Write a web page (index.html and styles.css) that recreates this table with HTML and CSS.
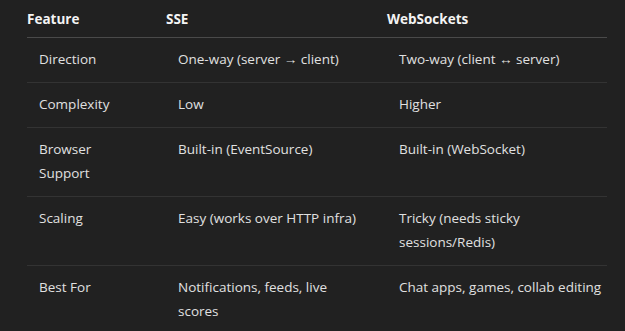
FILE: index.html
```html
<!DOCTYPE html>
<html lang="en">
<head>
    <meta charset="UTF-8">
    <meta name="viewport" content="width=device-width, initial-scale=1.0">
    <title>SSE vs WebSockets</title>
    <link rel="stylesheet" href="styles.css">
</head>
<body>
    <table class="compare">
        <colgroup>
            <col class="col-feature">
            <col class="col-sse">
            <col class="col-ws">
        </colgroup>
        <thead>
            <tr>
                <th>Feature</th>
                <th>SSE</th>
                <th>WebSockets</th>
            </tr>
        </thead>
        <tbody>
            <tr>
                <td>Direction</td>
                <td>One-way (server → client)</td>
                <td>Two-way (client ↔ server)</td>
            </tr>
            <tr>
                <td>Complexity</td>
                <td>Low</td>
                <td>Higher</td>
            </tr>
            <tr>
                <td>Browser<br>Support</td>
                <td>Built-in (EventSource)</td>
                <td>Built-in (WebSocket)</td>
            </tr>
            <tr>
                <td>Scaling</td>
                <td>Easy (works over HTTP infra)</td>
                <td>Tricky (needs sticky sessions/Redis)</td>
            </tr>
            <tr>
                <td>Best For</td>
                <td>Notifications, feeds, live<br>scores</td>
                <td class="nowrap">Chat apps, games, collab editing</td>
            </tr>
        </tbody>
    </table>
</body>
</html>
```

FILE: styles.css
```css
* {
    margin: 0;
    padding: 0;
    box-sizing: border-box;
}

body {
    font-family: 'Open Sans', 'Noto Sans', sans-serif;
    font-size: 13.5px;
    line-height: 24px;
    background: #212121;
    color: #e0e0e0;
    padding: 0 18px 0 27px;
}

.compare {
    width: 580px;
    border-collapse: collapse;
    table-layout: fixed;
}

.col-feature {
    width: 139px;
}

.col-sse {
    width: 221px;
}

.col-ws {
    width: 220px;
}

.compare th {
    text-align: left;
    font-weight: bold;
    color: #f4f4f4;
    padding: 7px 0 6px 0;
    border-bottom: 1px solid #4a4a4a;
}

.compare td {
    vertical-align: top;
    padding: 9px 0 11px 12px;
    border-bottom: 1px solid #333333;
}

.compare td.nowrap {
    white-space: nowrap;
}
```
